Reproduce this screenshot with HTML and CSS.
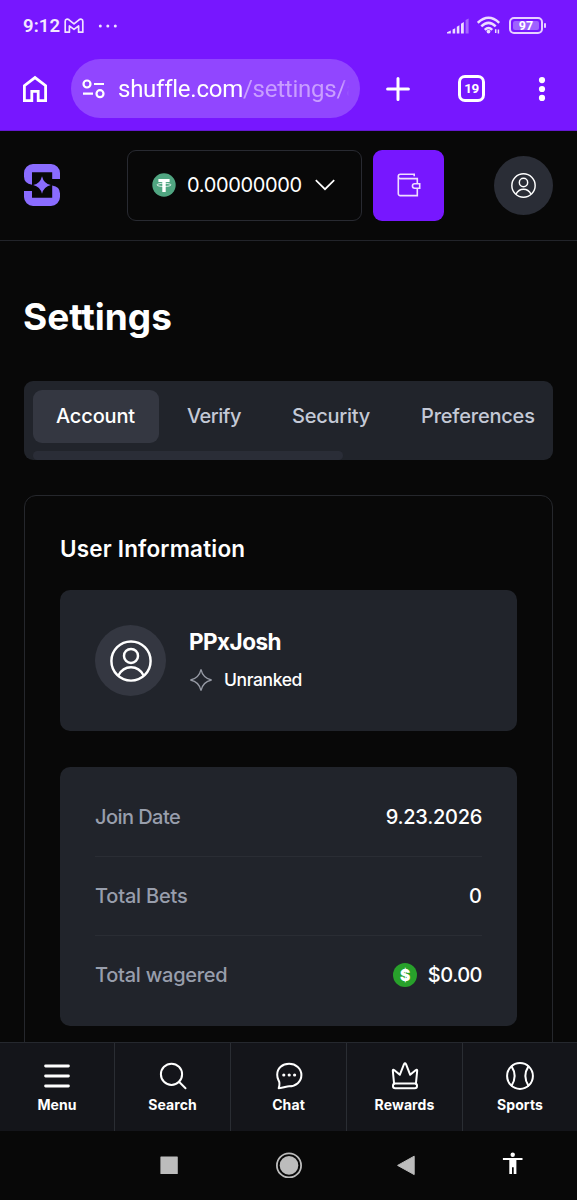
FILE: index.html
```html
<!DOCTYPE html>
<html lang="en">
<head>
<meta charset="utf-8">
<title>Settings</title>
<link rel="stylesheet" href="styles.css">
</head>
<body>
<div class="screen">
  <div class="browser">
    <div class="status">
      <span class="clock">9:12</span>
      <svg class="gmail" width="20" height="16" viewBox="0 0 20 16"><path d="M1.2 3.4C1.2 1.2 3.4.6 5 1.8L10 5.8 15 1.8C16.6.6 18.8 1.2 18.8 3.4V14.2H14.6V7.9L10 11.4 5.4 7.9V14.2H1.2Z"/></svg>
      <svg class="more" width="20" height="4" viewBox="0 0 20 4"><circle cx="2.3" cy="2" r="1.5"/><circle cx="9.8" cy="2" r="1.5"/><circle cx="17.3" cy="2" r="1.5"/></svg>
      <div class="indicators">
        <svg width="22" height="16" viewBox="0 0 22 16" fill="#ecdcff"><path d="M0 15.6V14.2L3.8 12.6V15.6ZM5.6 15.6V11.6L8.2 10.2V15.6ZM9.8 15.6V8.8L12.4 7.2V15.6ZM14 15.6V5.8L16.8 4V15.6Z"/><path d="M18.6 15.6V2L21.6.4V15.6Z" opacity=".4"/></svg>
        <svg width="24" height="19" viewBox="0 0 24 19" fill="none" stroke="#ecdcff" stroke-width="2.5"><path d="M.8 6.8Q11.5-3.2 22.2 6.8M4.3 10.4Q11.5 3.4 18.7 10.4M7.8 13.8Q11.5 10 15.2 13.8"/><circle cx="11.5" cy="15.6" r="1.9" fill="#ecdcff" stroke="none"/><path d="M18.7 13.2V17M21.4 13.6V17.6" stroke-width="1.5"/></svg>
        <span class="battery"><span class="charge">97</span></span>
      </div>
    </div>
    <div class="toolbar">
      <svg class="home" width="26" height="28" viewBox="0 0 26 28"><path d="M2.4 25.6V10.6L13 2.6 23.6 10.6V25.6H16.2V16.4H9.8V25.6Z"/></svg>
      <div class="address">
        <svg width="24" height="20" viewBox="0 0 24 20"><circle cx="5" cy="5" r="3.5"/><circle cx="18" cy="14.7" r="3.5"/><path d="M12 5H22M1 14.7H11"/></svg>
        <span class="url">shuffle.com<span class="path">/settings/a</span></span>
      </div>
      <svg class="plus" width="24" height="24" viewBox="0 0 24 24"><path d="M12 1.6V22.4M1.6 12H22.4"/></svg>
      <span class="tabcount">19</span>
      <svg class="kebab" width="8" height="26" viewBox="0 0 8 26"><circle cx="4" cy="4.1" r="3.1"/><circle cx="4" cy="13" r="3.1"/><circle cx="4" cy="21.9" r="3.1"/></svg>
    </div>
  </div>

  <header class="header">
    <svg class="logo" width="36" height="42" viewBox="0 0 36 42"><path d="M9 0H27A9 9 0 0 1 36 9V15H28.2V8.2H8V20.8Q0 19.5 0 12.5V9A9 9 0 0 1 9 0ZM9 42H27A9 9 0 0 0 36 33V29.5Q36 22.5 28.2 21.4V33.8H8V27H0V33A9 9 0 0 0 9 42Z"/><path d="M18 12.2Q19.8 19.6 26.8 21.1 19.8 22.8 18 29.8 16.2 22.8 9.2 21.1 16.2 19.6 18 12.2Z"/></svg>
    <div class="balance">
      <svg width="24" height="24" viewBox="0 0 24 24"><circle cx="12" cy="12" r="11.7" fill="#50a581"/><path d="M6.4 6H17.6V8.9H13.7V19H10.3V8.9H6.4Z" fill="#fff"/><ellipse cx="12" cy="11.9" rx="7" ry="1.6" fill="none" stroke="#fff" stroke-width=".8"/></svg>
      <span class="amount">0.00000000</span>
      <svg width="20" height="12" viewBox="0 0 20 12"><path d="M.8 1.2 10 10.2 19.2 1.2" fill="none" stroke="#fff" stroke-width="1.7"/></svg>
    </div>
    <div class="wallet">
      <svg width="24" height="24" viewBox="0 0 24 24"><path d="M20.3 10.6V5.6H3.4A2 2 0 0 1 3.4 1.3H17.2V3.2M1.3 3.5V20.4A2 2 0 0 0 3.3 22.6H20.3V15.5M17.7 10.8H22.7V15.3H17.7A2.2 2.2 0 0 1 17.7 10.8Z"/></svg>
    </div>
    <div class="profile">
      <svg class="person" width="25" height="25" viewBox="0 0 24 24"><circle cx="12" cy="12" r="11.2"/><circle cx="12" cy="9.1" r="4"/><path d="M4.8 20.3Q7.2 15.6 12 15.6T19.2 20.3"/></svg>
    </div>
  </header>

  <main class="content">
    <h1>Settings</h1>
    <nav class="tabs">
      <div class="tablist">
        <a class="tab active">Account</a>
        <a class="tab verify">Verify</a>
        <a class="tab security">Security</a>
        <a class="tab preferences">Preferences</a>
      </div>
      <div class="scrollbar"></div>
    </nav>
    <section class="panel">
      <h2>User Information</h2>
      <div class="card user">
        <div class="avatar"><svg class="person" width="42" height="42" viewBox="0 0 24 24"><circle cx="12" cy="12" r="11.2"/><circle cx="12" cy="9.1" r="4"/><path d="M4.8 20.3Q7.2 15.6 12 15.6T19.2 20.3"/></svg></div>
        <div class="identity">
          <div class="name">PPxJosh</div>
          <div class="rank"><svg width="24" height="24" viewBox="0 0 24 24"><path d="M12 1.4Q13.8 10.2 22.6 12 13.8 13.8 12 22.6 10.2 13.8 1.4 12 10.2 10.2 12 1.4Z"/></svg><span>Unranked</span></div>
        </div>
      </div>
      <div class="card stats">
        <div class="row"><span class="label join">Join Date</span><span class="value date">9.23.2026</span></div>
        <div class="row"><span class="label bets">Total Bets</span><span class="value">0</span></div>
        <div class="row"><span class="label wager">Total wagered</span><span class="value money"><span class="coin">$</span>$0.00</span></div>
      </div>
    </section>
  </main>

  <nav class="bottomnav">
    <a class="item"><svg width="28" height="28" viewBox="0 0 28 28"><path d="M2.6 4H25.4M2.6 14H25.4M2.6 24H25.4" stroke-width="2.9"/></svg><span>Menu</span></a>
    <a class="item"><svg width="28" height="28" viewBox="0 0 28 28"><circle cx="12.5" cy="12.3" r="10.6"/><path d="M20 19.8 26.5 26.3"/></svg><span>Search</span></a>
    <a class="item"><svg width="28" height="28" viewBox="0 0 28 28"><path d="M3.7 26.2C4.9 22.4 5 20.6 3.6 18.4A11.6 11.6 0 0 1 2.2 12.8C2.2 6.2 7.4 1.8 14.1 1.8S26.4 6.4 26.4 13.1 20.8 24.3 14.1 24.3C11 24.3 8.8 26 3.7 26.2Z"/><g fill="#fff" stroke="none"><circle cx="8.8" cy="13" r="1.6"/><circle cx="14.2" cy="13" r="1.6"/><circle cx="19.6" cy="13" r="1.6"/></g></svg><span>Chat</span></a>
    <a class="item"><svg width="28" height="28" viewBox="0 0 28 28"><path d="M3.1 21.8 1.8 8.7Q2 7.2 3.4 8.2L8.8 12.8 13 2.2Q14 .4 15 2.2L19.2 12.8 24.6 8.2Q26 7.2 26.2 8.7L24.9 21.8"/><rect x="2" y="21.6" width="24" height="4.6" rx="2.2"/></svg><span>Rewards</span></a>
    <a class="item"><svg width="28" height="28" viewBox="0 0 28 28"><circle cx="14" cy="14" r="12.9"/><path d="M5.6 4.4Q11.7 14 5.6 23.6M22.4 4.4Q16.3 14 22.4 23.6"/></svg><span>Sports</span></a>
  </nav>
  <div class="sysnav">
    <span></span>
    <svg width="26" height="26" viewBox="0 0 26 26"><rect x="4.4" y="4.4" width="17.4" height="17.6" rx=".6"/></svg>
    <svg width="26" height="26" viewBox="0 0 26 26"><circle cx="13" cy="13.4" r="12.1" fill="none" stroke="#bcbcbc" stroke-width="1.8"/><circle cx="13" cy="13.4" r="9.3"/></svg>
    <svg width="26" height="26" viewBox="0 0 26 26"><path d="M4.6 13.4 21.2 4.2V22.6Z" stroke="#bcbcbc" stroke-linejoin="round"/></svg>
    <svg class="access" width="26" height="26" viewBox="0 0 26 26"><circle cx="12.7" cy="2.8" r="2.2"/><path d="M2.9 5.9H22.5V8.1H16.4V22H13.7V15.2H12V22H9.3V8.1H2.9Z"/></svg>
  </div>
</div>
</body>
</html>
```
FILE: styles.css
```css
* { box-sizing: border-box; }
body { margin: 0; background: #080808; color: #fff; font-family: Inter, "Liberation Sans", sans-serif; }
svg { display: block; flex: none; }
h1, h2 { margin: 0; }
.screen { width: 577px; height: 1200px; display: flex; flex-direction: column; overflow: hidden; }

.browser { flex: none; height: 131px; background: #7717ff; border-bottom: 1px solid #6518d2; font-family: Roboto, sans-serif; }
.status { height: 59px; padding: 0 34px 8px 23px; display: flex; align-items: center; }
.clock { width: 38px; font-size: 18.5px; font-weight: 600; color: #f3e8ff; letter-spacing: .1px; white-space: nowrap; }
.gmail { margin-left: 3px; fill: none; stroke: #f0e2ff; stroke-width: 1.7; stroke-linejoin: round; }
.more { margin-left: 14px; fill: #f0e2ff; }
.indicators { margin-left: auto; display: flex; align-items: center; gap: 8px; }
.battery { width: 34px; height: 17px; border: 2px solid #e6d0ff; border-radius: 5px; padding: 2px; display: flex; position: relative; }
.battery::after { content: ""; position: absolute; right: -5px; top: 4px; width: 2px; height: 5px; border-radius: 1px; background: #e6d0ff; }
.charge { flex: 1; border-radius: 2px; background: #9f62ff; font-size: 12.5px; line-height: 10px; font-weight: 700; text-align: center; }
.toolbar { height: 59px; padding: 0 31px 0 22px; display: flex; align-items: center; }
.home { fill: none; stroke: #fff; stroke-width: 2.8; }
.address { width: 289px; height: 59px; margin-left: 23px; padding: 0 11px 0 11px; border-radius: 30px; background: #9146ff; display: flex; align-items: center; gap: 12px; }
.address svg { fill: none; stroke: #fff; stroke-width: 2.2; }
.url { flex: 1; overflow: hidden; white-space: nowrap; font-size: 24px; line-height: 32px; letter-spacing: -.25px; -webkit-mask-image: linear-gradient(90deg, #000 97%, transparent); mask-image: linear-gradient(90deg, #000 97%, transparent); }
.path { color: #c99eff; }
.plus { margin-left: 26px; fill: none; stroke: #fff; stroke-width: 3; stroke-linecap: round; }
.tabcount { width: 27px; height: 27px; margin-left: 48px; border: 3px solid #fff; border-radius: 7px; font-size: 13.5px; line-height: 21px; font-weight: 700; letter-spacing: -.4px; text-align: center; }
.kebab { margin-left: auto; fill: #fff; }

.header { flex: none; height: 110px; padding: 0 24px 1px; border-bottom: 1px solid #22242a; display: flex; align-items: center; }
.logo { fill: #8a6cff; }
.balance { width: 235px; height: 71px; margin-left: 67px; padding: 0 26px 0 24px; border: 1px solid #282a31; border-radius: 9px; display: flex; align-items: center; gap: 11px; }
.amount { width: 118px; font-size: 20px; letter-spacing: -.35px; white-space: nowrap; }
.wallet { width: 71px; height: 71px; margin-left: 11px; border-radius: 9px; background: #7717ff; display: grid; place-items: center; }
.wallet svg { fill: none; stroke: #f0deff; stroke-width: 1.6; }
.profile { width: 59px; height: 59px; margin-left: auto; border-radius: 50%; background: #2a2d36; display: grid; place-items: center; }
.person { fill: none; stroke: #fff; stroke-width: 1.4; }

.content { flex: 1; min-height: 0; overflow: hidden; padding: 50px 24px 0; }
h1 { height: 52px; font-size: 37px; line-height: 51px; font-weight: 700; letter-spacing: -.05px; margin-left: -1px; }
.tabs { height: 79px; margin-top: 38px; padding: 9px 9px 0; border-radius: 9px; background: #21242b; overflow: hidden; }
.tablist { display: flex; gap: 4px; height: 53px; }
.tab { flex: none; width: 126px; padding-left: 23px; border-radius: 9px; font-size: 20px; line-height: 53px; font-weight: 500; letter-spacing: -.15px; color: #c4c9d6; white-space: nowrap; }
.tab.active { background: #343741; color: #fff; }
.verify { width: 102px; padding-left: 24px; letter-spacing: -.5px; }
.security { width: 125px; letter-spacing: -.25px; }
.preferences { width: 165px; letter-spacing: -.2px; }
.scrollbar { width: 310px; height: 9px; margin-top: 8px; border-radius: 5px; background: #2a2d37; }
.panel { height: 600px; margin-top: 35px; padding: 36px 35px; border: 1px solid #25272c; border-radius: 12px; }
h2 { font-size: 22.5px; line-height: 34px; font-weight: 600; letter-spacing: .18px; white-space: nowrap; }
.card { width: 457px; border-radius: 10px; background: #21242b; padding: 0 35px; }
.user { height: 141px; margin-top: 24px; display: flex; align-items: center; gap: 23px; }
.avatar { width: 71px; height: 71px; border-radius: 50%; background: #343741; display: grid; place-items: center; }
.identity { padding-bottom: 4px; }
.name { font-size: 22.5px; line-height: 32px; font-weight: 700; letter-spacing: -.55px; }
.rank { margin-top: 10px; display: flex; align-items: center; gap: 11px; font-size: 17.5px; line-height: 24px; font-weight: 500; letter-spacing: -.4px; }
.rank svg { fill: none; stroke: #969aa4; stroke-width: 1.3; }
.stats { height: 259px; margin-top: 36px; padding-top: 11px; }
.row { height: 79px; display: flex; align-items: center; justify-content: space-between; font-size: 20px; font-weight: 500; border-bottom: 1px solid #2a2d34; }
.row:last-child { border: 0; padding-bottom: 1px; }
.label { color: #989eac; font-weight: 450; }
.join { letter-spacing: -.55px; }
.bets { letter-spacing: -.2px; }
.wager { letter-spacing: -.25px; }
.value { white-space: nowrap; }
.date { letter-spacing: -.28px; }
.money { display: flex; align-items: center; gap: 11px; letter-spacing: -.5px; }
.coin { width: 24px; height: 24px; border-radius: 50%; background: #28a12b; display: grid; place-items: center; font-size: 15.5px; font-weight: 900; }

.bottomnav { flex: none; height: 89px; border-top: 1px solid #25282e; background: #14151a; display: grid; grid-template-columns: 115px 116px 116px 116px 114px; }
.item { border-right: 1px solid #2a2d33; padding-top: 19px; display: flex; flex-direction: column; align-items: center; gap: 6px; font-size: 14px; line-height: 18px; font-weight: 700; letter-spacing: .1px; }
.item:last-child { border: 0; }
.item svg { fill: none; stroke: #fff; stroke-width: 2; stroke-linecap: round; stroke-linejoin: round; }
.sysnav { flex: none; height: 69px; padding-bottom: 1px; display: grid; grid-template-columns: 110px 118px 121px 114px 100px; align-items: center; justify-items: center; fill: #bcbcbc; }
.sysnav .access { fill: #fff; }
```
